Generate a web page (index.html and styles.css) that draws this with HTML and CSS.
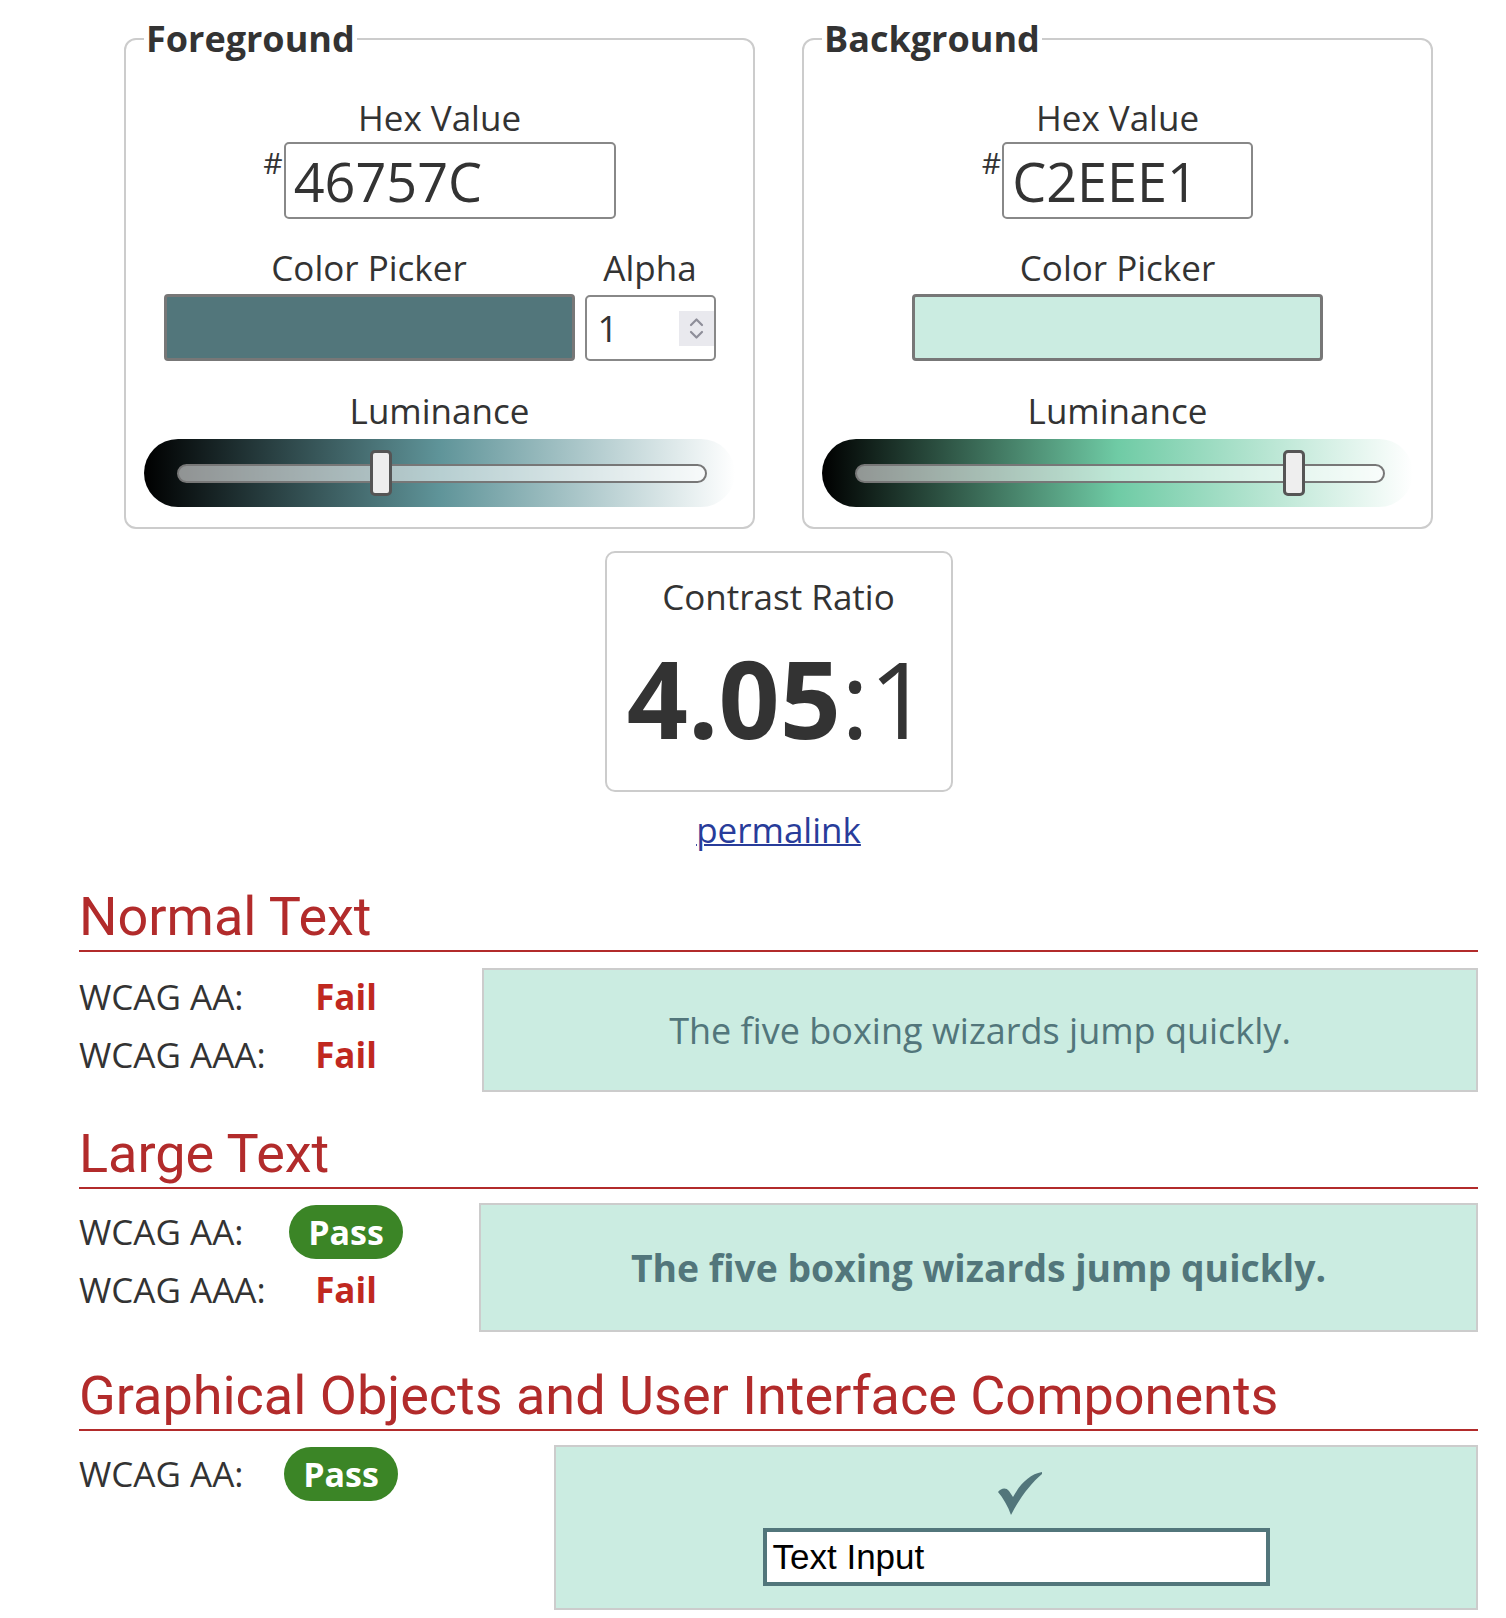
FILE: index.html
```html
<!DOCTYPE html>
<html lang="en">
<head>
<meta charset="utf-8">
<title>Contrast Checker</title>
<link rel="stylesheet" href="styles.css">
</head>
<body>
<main class="page">
  <div class="pickers">
    <fieldset class="picker">
      <legend>Foreground</legend>
      <div class="label label-hex">Hex Value</div>
      <div class="hexrow"><span class="hash">#</span><div class="hexinput hexinput-fg">46757C</div></div>
      <div class="pickrow">
        <div class="pickcol">
          <div class="label">Color Picker</div>
          <div class="swatch swatch-fg"></div>
        </div>
        <div class="pickcol">
          <div class="label">Alpha</div>
          <div class="alpha"><span>1</span><span class="spin"><svg width="35" height="35" viewBox="0 0 35 35"><path d="M12 14 L17.5 8.5 L23 14 M12 21 L17.5 26.5 L23 21" fill="none" stroke="#8e8e99" stroke-width="2.2" stroke-linecap="round" stroke-linejoin="round"/></svg></span></div>
        </div>
      </div>
      <div class="label label-lum">Luminance</div>
      <div class="lum lum-fg"><div class="track"><div class="thumb" style="left:191px"></div></div></div>
    </fieldset>
    <fieldset class="picker">
      <legend>Background</legend>
      <div class="label label-hex">Hex Value</div>
      <div class="hexrow"><span class="hash">#</span><div class="hexinput hexinput-bg">C2EEE1</div></div>
      <div class="pickrow">
        <div class="pickcol">
          <div class="label">Color Picker</div>
          <div class="swatch swatch-bg"></div>
        </div>
      </div>
      <div class="label label-lum">Luminance</div>
      <div class="lum lum-bg"><div class="track"><div class="thumb" style="left:426px"></div></div></div>
    </fieldset>
  </div>

  <div class="ratio">
    <div class="ratio-label">Contrast Ratio</div>
    <div class="ratio-value"><b>4.05</b>:1</div>
  </div>
  <a class="permalink" href="#">permalink</a>

  <section class="result result-normal">
    <h2>Normal Text</h2>
    <div class="result-body">
      <div class="levels">
        <div class="level"><span class="lvl-name">WCAG AA:</span><span class="lvl-res"><span class="fail">Fail</span></span></div>
        <div class="level"><span class="lvl-name">WCAG AAA:</span><span class="lvl-res"><span class="fail">Fail</span></span></div>
      </div>
      <div class="sample sample-normal">The five boxing wizards jump quickly.</div>
    </div>
  </section>

  <section class="result result-large">
    <h2>Large Text</h2>
    <div class="result-body">
      <div class="levels">
        <div class="level"><span class="lvl-name">WCAG AA:</span><span class="lvl-res"><span class="pass">Pass</span></span></div>
        <div class="level"><span class="lvl-name">WCAG AAA:</span><span class="lvl-res"><span class="fail">Fail</span></span></div>
      </div>
      <div class="sample sample-large">The five boxing wizards jump quickly.</div>
    </div>
  </section>

  <section class="result result-ui">
    <h2>Graphical Objects and User Interface Components</h2>
    <div class="result-body">
      <div class="levels">
        <div class="level"><span class="lvl-name">WCAG AA:</span><span class="lvl-res"><span class="pass">Pass</span></span></div>
      </div>
      <div class="sample sample-ui">
        <svg class="check" width="44" height="44" viewBox="0 0 44 44"><path d="M0 21 C3 17 8 16 11 20 L15 26 C22 13 32 3 44 1 L44 3 C33 12 21 28 13 44 C10 35 5 27 0 21 Z" fill="#52767b"/></svg>
        <div class="textinput">Text Input</div>
      </div>
    </div>
  </section>
</main>
</body>
</html>
```

FILE: styles.css
```css
body {
  margin: 0;
  font-family: "Open Sans", sans-serif;
  color: #333;
  background: #fff;
}

.page {
  padding: 15px 28px 0 79px;
}

/* ---------- colour pickers ---------- */
.pickers {
  display: flex;
  justify-content: center;
  gap: 47px;
}

.picker {
  width: 631px;
  box-sizing: border-box;
  margin: 0;
  min-width: 0;
  border: 2px solid #ccc;
  border-radius: 12px;
  padding: 0 18px 20px;
}

.picker legend {
  font-weight: 700;
  font-size: 36px;
  line-height: 48px;
  padding: 0 2px;
  color: #333;
}

.label {
  font-size: 35px;
  line-height: 40px;
  text-align: center;
}

.label-hex {
  margin-top: 35px;
}

.hexrow {
  display: flex;
  justify-content: center;
  margin-top: 4px;
}

.hash {
  font-size: 30px;
  line-height: 30px;
  margin-top: 6px;
  margin-right: 1px;
}

.hexinput {
  height: 77px;
  box-sizing: border-box;
  border: 2px solid #888;
  border-radius: 5px;
  padding-left: 8px;
  font-size: 54px;
  display: flex;
  align-items: center;
  color: #333;
}

.hexinput-fg { width: 332px; }
.hexinput-bg { width: 251px; }

.pickrow {
  display: flex;
  justify-content: center;
  align-items: flex-end;
  gap: 10px;
  margin-top: 29px;
}

.swatch {
  width: 411px;
  height: 67px;
  box-sizing: border-box;
  margin-top: 6px;
  border: 3px solid #777;
  border-radius: 4px;
}

.swatch-fg { background: #52767b; }
.swatch-bg { background: #cbece1; }

.alpha {
  width: 131px;
  height: 66px;
  box-sizing: border-box;
  margin-top: 7px;
  border: 2px solid #888;
  border-radius: 5px;
  padding-left: 11px;
  display: flex;
  align-items: center;
  justify-content: space-between;
  font-size: 36px;
}

.spin {
  display: block;
  width: 35px;
  height: 35px;
  background: #e9e9ee;
}

.spin svg { display: block; }

.label-lum {
  margin-top: 30px;
}

.lum {
  margin-top: 8px;
  height: 68px;
  border-radius: 34px;
  display: flex;
  align-items: center;
  padding: 0 28px 0 33px;
  box-sizing: border-box;
}

.lum-fg {
  background: linear-gradient(to right, #000 0%, #5f9499 50%, #fff 100%);
}

.lum-bg {
  background: linear-gradient(to right, #000 0%, #6fcba5 50%, #fff 100%);
}

.track {
  position: relative;
  flex: 1;
  height: 19px;
  box-sizing: border-box;
  border: 2px solid #777;
  border-radius: 10px;
  background: rgba(255, 255, 255, 0.55);
}

.thumb {
  position: absolute;
  top: 50%;
  margin-top: -23px;
  width: 22px;
  height: 46px;
  box-sizing: border-box;
  border: 3px solid #555;
  border-radius: 5px;
  background: #eee;
}

/* ---------- ratio ---------- */
.ratio {
  width: 348px;
  height: 241px;
  box-sizing: border-box;
  margin: 22px auto 0;
  padding-top: 24px;
  border: 2px solid #ccc;
  border-radius: 10px;
  text-align: center;
}

.ratio-label {
  font-size: 35px;
  line-height: 40px;
}

.ratio-value {
  margin-top: 26px;
  font-size: 107px;
  line-height: 110px;
}

.ratio-value b { font-weight: 700; }

.permalink {
  display: block;
  width: max-content;
  margin: 18px auto 0;
  font-size: 35px;
  line-height: 40px;
  color: #283c9a;
  text-decoration: underline;
  text-decoration-thickness: 2px;
}

/* ---------- results ---------- */
.result h2 {
  margin: 32px 0 0;
  font-family: Roboto, sans-serif;
  font-weight: 400;
  font-size: 54px;
  line-height: 60px;
  color: #b22b2b;
  padding-bottom: 3px;
  border-bottom: 2px solid #b22b2b;
}

.result-normal h2 { margin-top: 37px; }
.result-ui h2 { margin-top: 34px; }

.result-body {
  display: flex;
  margin-top: 14px;
}

.result-normal .result-body { margin-top: 16px; }

.levels { flex: none; }
.result-normal .levels { width: 403px; }
.result-large .levels { width: 400px; }
.result-ui .levels { width: 475px; }

.level {
  display: grid;
  grid-template-columns: 190px 154px;
  align-items: start;
  height: 58px;
  font-size: 35px;
  line-height: 58px;
}

.result-ui .level { grid-template-columns: 185px 154px; }

.lvl-res { justify-self: center; }

.fail {
  font-weight: 700;
  color: #c0281f;
}

.pass {
  display: inline-block;
  height: 54px;
  padding: 0 19px;
  border-radius: 27px;
  background: #3b8526;
  color: #fff;
  font-weight: 700;
  font-size: 34px;
  line-height: 54px;
}

.sample {
  flex: 1;
  box-sizing: border-box;
  border: 2px solid #ccc;
  background: #cbece1;
  color: #52767b;
  display: flex;
  align-items: center;
  justify-content: center;
}

.sample-normal {
  height: 124px;
  font-size: 36px;
}

.sample-large {
  height: 129px;
  font-size: 37.3px;
  font-weight: 700;
}

.sample-ui {
  height: 165px;
  flex-direction: column;
  justify-content: flex-start;
  padding-top: 24px;
}

.check {
  display: block;
  margin-left: 8px;
}

.textinput {
  width: 507px;
  height: 58px;
  box-sizing: border-box;
  margin-top: 13px;
  border: 4px solid #52767b;
  background: #fff;
  padding-left: 6px;
  display: flex;
  align-items: center;
  font-family: "Liberation Sans", Arial, sans-serif;
  font-size: 35px;
  color: #000;
}
```
